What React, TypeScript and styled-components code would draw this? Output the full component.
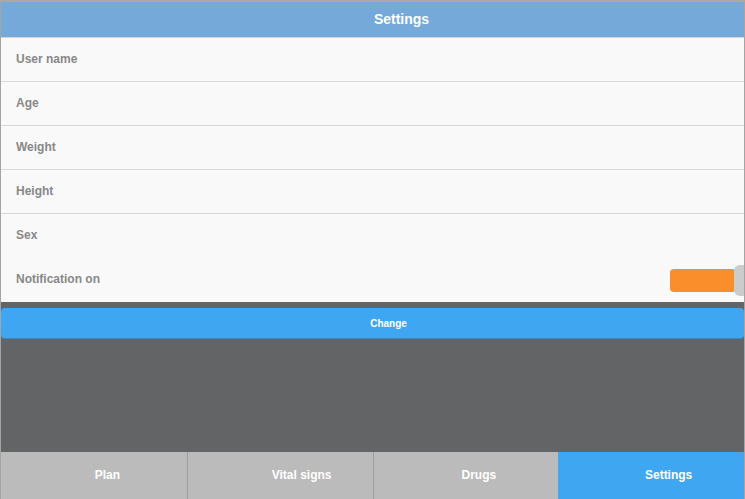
import React from "react";
import styled, { createGlobalStyle } from "styled-components";

const GlobalStyle = createGlobalStyle`
  html, body {
    margin: 0;
    padding: 0;
    background: #636466;
    font-family: "Liberation Sans", Arial, sans-serif;
  }
`;

const Page = styled.div`
  box-sizing: border-box;
  height: 499px;
  display: flex;
  flex-direction: column;
  background: #636466;
  border-top: 2px solid #a9a9a9;
  border-left: 1px solid #a4a4a4;
  border-right: 1px solid #a4a4a4;
  overflow: hidden;
`;

const Header = styled.div`
  box-sizing: border-box;
  height: 36px;
  flex: none;
  display: flex;
  align-items: center;
  justify-content: center;
  padding: 0 0 2px 58px;
  background: #74a9d9;
  border-bottom: 1px solid #d6d6d6;
  color: #fff;
  font-size: 14px;
  font-weight: bold;
`;

const List = styled.div`
  flex: none;
  background: #f9f9f9;
`;

const Row = styled.div<{ $last?: boolean }>`
  box-sizing: border-box;
  height: 44px;
  display: flex;
  align-items: center;
  justify-content: space-between;
  padding: 0 0 2px 15px;
  border-bottom: 1px solid ${(p) => (p.$last ? "#f9f9f9" : "#d8d8d8")};
  background: #f9f9f9;
  color: #888888;
  font-size: 12px;
  font-weight: bold;
`;

const Switch = styled.div`
  position: relative;
  width: 74px;
  height: 23px;
  margin-top: 3px;
`;

const Track = styled.div`
  width: 66px;
  height: 23px;
  border-radius: 4px;
  background: #f98e2a;
`;

const Knob = styled.div`
  position: absolute;
  top: -4px;
  left: 64px;
  width: 26px;
  height: 31px;
  border-radius: 6px;
  background: #cccccc;
`;

const ButtonArea = styled.div`
  flex: 1;
  padding-top: 6px;
`;

const ChangeButton = styled.button`
  display: block;
  width: 100%;
  height: 31px;
  padding: 0 0 0 32px;
  border: none;
  border-bottom: 1px solid #3a86c0;
  border-radius: 4px;
  background: #3fa7f2;
  color: #fff;
  font-family: "Liberation Sans", Arial, sans-serif;
  font-size: 10px;
  font-weight: bold;
  cursor: pointer;
`;

const TabBar = styled.div`
  flex: none;
  height: 47px;
  display: grid;
  grid-template-columns: repeat(4, 1fr);
  background: #bbbbbb;
`;

const Tab = styled.div<{ $active?: boolean; $shift: number }>`
  display: flex;
  align-items: center;
  justify-content: center;
  padding-left: ${(p) => p.$shift}px;
  padding-bottom: 2px;
  background: ${(p) => (p.$active ? "#3fa7f2" : "#bbbbbb")};
  border-left: 1px solid ${(p) => (p.$active ? "#3fa7f2" : "#9e9e9e")};
  color: #fff;
  font-size: 12px;
  font-weight: bold;
  &:first-child {
    border-left: none;
  }
`;

const fields = ["User name", "Age", "Weight", "Height", "Sex"];

const tabs = [
  { label: "Plan", shift: 27 },
  { label: "Vital signs", shift: 43 },
  { label: "Drugs", shift: 26 },
  { label: "Settings", shift: 34, active: true },
];

export default function App() {
  return (
    <>
      <GlobalStyle />
      <Page>
        <Header>Settings</Header>
        <List>
          {fields.map((f, i) => (
            <Row key={f} $last={i === fields.length - 1}>
              {f}
            </Row>
          ))}
          <Row $last>
            Notification on
            <Switch>
              <Track />
              <Knob />
            </Switch>
          </Row>
        </List>
        <ButtonArea>
          <ChangeButton>Change</ChangeButton>
        </ButtonArea>
        <TabBar>
          {tabs.map((t) => (
            <Tab key={t.label} $active={t.active} $shift={t.shift}>
              {t.label}
            </Tab>
          ))}
        </TabBar>
      </Page>
    </>
  );
}
